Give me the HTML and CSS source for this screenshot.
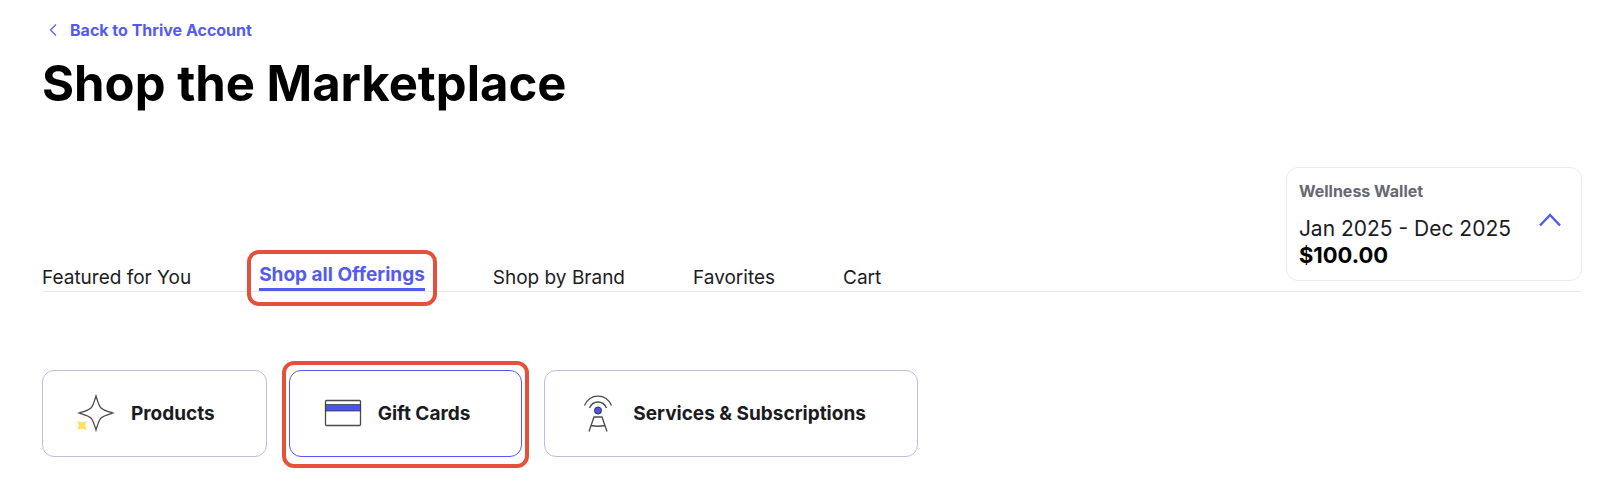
FILE: index.html
```html
<!DOCTYPE html>
<html lang="en">
<head>
    <meta charset="UTF-8">
    <meta name="viewport" content="width=device-width, initial-scale=1.0">
    <title>Shop the Marketplace</title>
    <link rel="stylesheet" href="styles.css">
</head>
<body>
    <header class="page-header">
        <a class="back-link" href="#">
            <svg class="back-icon" viewBox="0 0 8 12" aria-hidden="true">
                <path d="M7 .5 1.500 6 7 11.500"/>
            </svg>
            Back to Thrive Account
        </a>
        <h1>Shop the Marketplace</h1>
    </header>

    <div class="toolbar">
        <nav class="tabs">
            <a class="tab" href="#">Featured for You</a>
            <a class="tab active highlight" href="#">Shop all Offerings</a>
            <a class="tab" href="#">Shop by Brand</a>
            <a class="tab" href="#">Favorites</a>
            <a class="tab" href="#">Cart</a>
        </nav>
        <section class="wallet">
            <div class="wallet-details">
                <h2>Wellness Wallet</h2>
                <p class="wallet-period">Jan 2025 - Dec 2025</p>
                <p class="wallet-amount">$100.00</p>
            </div>
            <button class="wallet-toggle" type="button" aria-label="Toggle wallet">
                <svg viewBox="0 0 22 14" aria-hidden="true">
                    <path d="M1 12.500 11 2l10 10.500"/>
                </svg>
            </button>
        </section>
    </div>

    <main class="categories">
        <button class="category" type="button">
            <svg class="category-icon" viewBox="0 0 36 38" aria-hidden="true">
                <path class="line" d="M18 1C19.500 6 20.500 9.500 22.500 12.500 25.500 15.500 30 16.500 35 18 30 19.500 25.500 20.500 22.500 23.500 20.500 26.500 19.500 30 18 35 16.500 30 15.500 26.500 13.500 23.500 10.500 20.500 6 19.500 1 18 6 16.500 10.500 15.500 13.500 12.500 15.500 9.500 16.500 6 18 1Z"/>
                <path class="sparkle" d="M-1 25.500Q4 29 9 25.500 6 30.500 9 35.500 4 32 -1 35.500 2 30.500 -1 25.500Z"/>
            </svg>
            Products
        </button>
        <button class="category selected highlight" type="button">
            <svg class="category-icon" viewBox="0 0 36 38" aria-hidden="true">
                <rect class="line" x=".5" y="5.500" width="35" height="25" rx="1"/>
                <rect class="stripe" x=".5" y="9.500" width="35" height="6.500"/>
            </svg>
            Gift Cards
        </button>
        <button class="category" type="button">
            <svg class="category-icon" viewBox="0 0 36 38" aria-hidden="true">
                <path class="line" d="M4.500 10.500C10 -2 26 -2 31.500 10.500M9.500 13C13 5 23 5 26.500 13"/>
                <circle class="dot" cx="18" cy="15.500" r="3.500"/>
                <path class="line" d="M9 36.500 14 22h8l5 14.500M11.500 30.500q6.500 1.500 13 0"/>
            </svg>
            Services &amp; Subscriptions
        </button>
    </main>
</body>
</html>
```

FILE: styles.css
```css
* {
    box-sizing: border-box;
}
body {
    margin: 0;
    padding: 20px 30px 12px 42px;
    font-family: Inter, "Liberation Sans", Arial, sans-serif;
    background-color: white;
    color: #000;
}
h1, h2, p {
    margin: 0;
}
.back-link {
    display: inline-flex;
    align-items: center;
    gap: 13px;
    padding-left: 7px;
    font-size: 16px;
    line-height: 20px;
    font-weight: 700;
    color: #535bef;
    text-decoration: none;
}
.back-icon {
    width: 8px;
    height: 12px;
    fill: none;
    stroke: #535bef;
    stroke-width: 1.2;
}
h1 {
    margin-top: 14px;
    font-size: 49px;
    line-height: 60px;
    font-weight: 700;
}
.toolbar {
    display: flex;
    align-items: flex-end;
    justify-content: space-between;
    margin-top: 53px;
    border-bottom: 1px solid #e9e9ea;
}
.tabs {
    display: flex;
    align-items: flex-end;
    gap: 68px;
}
.tab {
    font-size: 19px;
    line-height: 26px;
    color: #1b1b1f;
    text-decoration: none;
}
.tab.active {
    font-weight: 700;
    color: #535bef;
    border-bottom: 3px solid #535bef;
}
/* red frame around the current choice */
.highlight {
    position: relative;
}
.highlight::after {
    content: "";
    position: absolute;
    border: 4px solid #e5503c;
    border-radius: 12px;
    pointer-events: none;
}
.tab.highlight::after {
    inset: -12px -12px -18px;
}
.wallet {
    display: flex;
    align-items: center;
    gap: 28px;
    margin-bottom: 10px;
    padding: 13px 20px 11px 12px;
    border: 1px solid #ebebed;
    border-radius: 12px;
}
.wallet h2 {
    margin-bottom: 14px;
    font-size: 16px;
    line-height: 20px;
    font-weight: 700;
    color: #686871;
}
.wallet p {
    font-size: 21px;
    line-height: 27px;
}
.wallet-period {
    color: #1b1b1f;
}
.wallet .wallet-amount {
    font-size: 22px;
    font-weight: 700;
}
.wallet-toggle {
    margin-bottom: 10px;
    padding: 0;
    border: none;
    background: none;
    cursor: pointer;
}
.wallet-toggle svg {
    display: block;
    width: 22px;
    height: 14px;
    fill: none;
    stroke: #535bef;
    stroke-width: 2.5;
}
.categories {
    display: flex;
    gap: 22px;
    margin-top: 78px;
}
.category {
    display: flex;
    align-items: center;
    gap: 17px;
    height: 87px;
    padding: 0 51px 0 35px;
    border: 1px solid #bcbedd;
    border-radius: 12px;
    background: white;
    font-family: inherit;
    font-size: 19px;
    font-weight: 700;
    color: #1b1b1f;
    cursor: pointer;
}
.category.selected {
    border-color: #535bef;
}
.category.highlight::after {
    inset: -10px -8px -12px;
}
.category-icon {
    width: 36px;
    height: 38px;
    overflow: visible;
}
.line {
    fill: none;
    stroke: #4a4a4d;
    stroke-width: 1.3;
}
.sparkle {
    fill: #ffe062;
}
.stripe {
    fill: #4b54e6;
    stroke: #333;
    stroke-width: .7;
}
.dot {
    fill: #4b54e6;
    stroke: #333;
}
```
